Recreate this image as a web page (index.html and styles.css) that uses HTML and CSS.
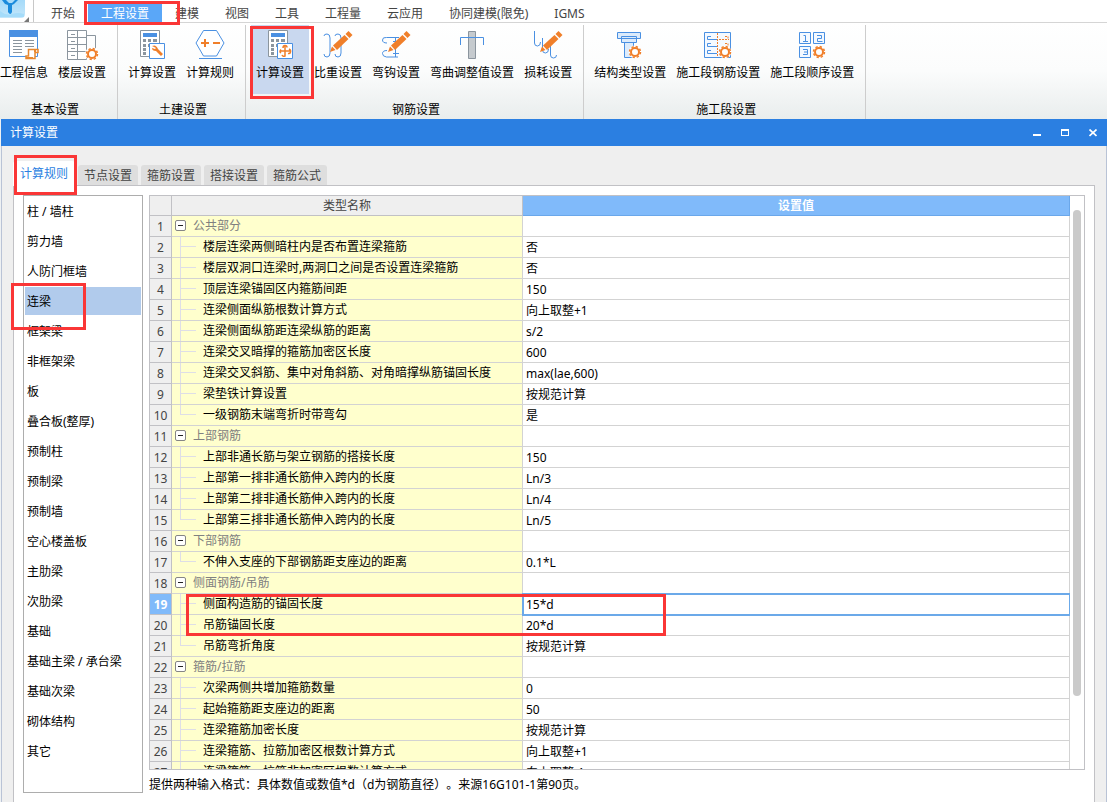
FILE: index.html
```
<!DOCTYPE html>
<html lang="zh-CN">
<head>
<meta charset="utf-8">
<title>计算设置</title>
<link rel="stylesheet" href="styles.css">
</head>
<body>
<svg class="defs" width="0" height="0" aria-hidden="true">
  <defs>
    <g id="gear" fill="none" stroke="#f07f2a">
      <circle r="4" stroke-width="2"/>
      <circle r="5.500" stroke-width="1.500" stroke-dasharray="2.300 2.020"/>
    </g>
    <g id="pencil">
      <path d="M7 22l2-5.500 3.500 3.500z" fill="#f07f2a"/>
      <path d="M10 15.500L21.500 5l4 4L14 20z" fill="#f07f2a"/>
      <path d="M22.500 4l3-3 4 4-3 3z" fill="#f07f2a"/>
    </g>
    <g id="calc">
      <path d="M3.500.5h19v26h-19z" fill="#fff" stroke="#8b959e"/>
      <path d="M6 3h14v4H6z" fill="#4a90e2"/>
      <path d="M6 9h3v3H6zM11 9h3v3h-3zM16 9h4v3h-4zM6 14h3v3H6zM11 14h3v3h-3zM6 18h3v3H6zM6 22h3v3H6z" fill="#8b959e"/>
      <path d="M12.500 13.500h15v15h-15z" fill="#fff" stroke="#4a90e2"/>
    </g>
    <linearGradient id="sky" x2="0" y2="1"><stop stop-color="#9bd6f8"/><stop offset="1" stop-color="#c4e7fb"/></linearGradient>
  </defs>
</svg>

<header class="app">
  <nav class="menu">
    <span class="logo">
      <svg width="34" height="22" viewBox="0 0 34 22">
        <rect x="-4" y="-6" width="29" height="24" rx="4" fill="url(#sky)"/>
        <path d="M0 11q6 5 12 3t12 0v3H0z" fill="#a5dcfa"/>
        <path d="M2 0h4l3 3h3l3-3h3l-4 4-2 1v7q-1.500 4-4 0V5L5 4z" fill="#1b8bdc"/>
        <path d="M29 17v5h-5z" fill="#777"/>
        <path d="M33.500 0v22" stroke="#c8c8c8"/>
      </svg>
    </span>
    <button>开始</button>
    <button class="current">工程设置</button>
    <button>建模</button>
    <button>视图</button>
    <button>工具</button>
    <button>工程量</button>
    <button>云应用</button>
    <button>协同建模(限免)</button>
    <button>IGMS</button>
    <span class="mark mark-menu"></span>
  </nav>

  <div class="ribbon">
    <section class="group">
      <div class="tools">
        <button><svg viewBox="0 0 30 30"><path d="M.5.500h28v26H.5z" fill="#fff" stroke="#4a90e2"/><path d="M0 0h29v7H0z" fill="#4a90e2"/><path d="M4 10.500h9M4 13.500h9M4 16.500h9M4 19.500h9M4 22.500h9M16 10.500h9M16 13.500h9M16 16.500h9" stroke="#8b959e"/><path d="M19.500 19.500h9.500v3h-3v6h-9v-2.500h2.500z" fill="#fff" stroke="#e8882e" stroke-width="1.500"/><path d="M26 22v-2.500M17 28h7" stroke="#e8882e" stroke-width="2"/></svg>工程信息</button>
        <button><svg viewBox="0 0 30 30"><path d="M.5.500h19v29H.5z" fill="#fff" stroke="#8b959e"/><path d="M.5 7.500h19M.5 14.500h19M.5 21.500h19M20 5.500h8.500V20M10.500 1v28M4 4.500h4M4 11.500h4M4 18.500h4M4 25.500h4" stroke="#8b959e" fill="none"/><circle cx="25" cy="24" r="7" fill="#fff"/><use href="#gear" x="25" y="24"/></svg>楼层设置</button>
      </div>
      <h2>基本设置</h2>
    </section>
    <section class="group">
      <div class="tools">
        <button><svg viewBox="0 0 30 30"><use href="#calc"/><path d="M15 16q4-2 6 3l5 5-2 2-5-5q-4 0-4-3l3 1 1-1z" fill="#f07f2a"/></svg>计算设置</button>
        <button><svg viewBox="0 0 30 30"><path d="M8.500.5h13L29 13l-7.500 13h-13L1 13z" fill="#fff" stroke="#4a90e2"/><path d="M4 28.500h23" stroke="#4a90e2"/><path d="M6 13h8M10 9v8M18 13h7" stroke="#f07f2a" stroke-width="2"/></svg>计算规则</button>
      </div>
      <h2>土建设置</h2>
    </section>
    <section class="group">
      <div class="tools">
        <button class="pressed"><svg viewBox="0 0 30 30"><use href="#calc"/><path d="M18 18q0-2.500 2-2.500t2 2M20 16v10q-2 1-3-1M15 21h10M24 19q2 1 1.500 3t-2.500 1.500M16 19.500q-2 2 0 3.500" fill="none" stroke="#f07f2a" stroke-width="1.500"/></svg>计算设置</button>
        <button><svg viewBox="0 0 30 30"><path d="M1 6q0-2 3-2t3 4v15q0 4-3 4t-3-3M12 6q0-2 3-2t3 4v15q0 4-3 4t-3-3" fill="none" stroke="#4a90e2"/><use href="#pencil"/></svg>比重设置</button>
        <button><svg viewBox="0 0 30 30"><path d="M6 13q-4.500 0-4.500-3t4-2.500H18M6 20.500q-4.500 0-4.500 3t4 3.500H17M14.500 7v20M12 11.500h6M12 23.500h6" fill="none" stroke="#4a90e2"/><use href="#pencil"/></svg>弯钩设置</button>
        <button><svg viewBox="0 0 30 30"><path d="M11.500 1.500h7v27h-7z" fill="#c5cace" stroke="#8b959e"/><path d="M3.500 15V7.500h23V15" fill="none" stroke="#4a90e2"/></svg>弯曲调整值设置</button>
        <button><svg viewBox="0 0 30 30"><path d="M1.500 1v12q0 3 3 3t3-4M9.500 8v12q0 3 3 3t3-4M17.500 13v12q0 3 3 3t3-3" fill="none" stroke="#4a90e2"/><use href="#pencil"/></svg>损耗设置</button>
      </div>
      <h2>钢筋设置</h2>
    </section>
    <section class="group">
      <div class="tools">
        <button><svg viewBox="0 0 30 30"><path d="M2.500 2.500h23v6h-23zM6.500 6.500h15v6h-15zM9.500 12.500h9v15h-9z" fill="#dcebfb" stroke="#4a90e2"/><circle cx="20" cy="22" r="6.500" fill="#fff"/><use href="#gear" x="20" y="22"/></svg>结构类型设置</button>
        <button><svg viewBox="0 0 30 30"><path d="M1.500 2.500h26v25h-26z" fill="#f4f9ff" stroke="#4a90e2"/><path d="M8 6.500H4.500v3H14M8 13.500H4.500v3H14M8 20.500H4.500v3H14" fill="none" stroke="#4a90e2"/><path d="M14.500 3v24M16 9.500h10M22 6.500h3v3M22 13.500h3v3" fill="none" stroke="#f07f2a" stroke-dasharray="2 1"/><circle cx="22" cy="22" r="6.500" fill="#fff"/><use href="#gear" x="22" y="22"/></svg>施工段钢筋设置</button>
        <button><svg viewBox="0 0 30 30"><path d="M2.500 2.500h11v11h-11zM16.500 2.500h11v11h-11zM2.500 16.500h11v11h-11z" fill="#f4f9ff" stroke="#4a90e2"/><path d="M6.500 5.500h2v6M6 11.500h5M20 5.500h4.500v3h-4v3h5M6 19.500h4.500v5H6M7 22h3" fill="none" stroke="#4a90e2"/><use href="#gear" x="22" y="22"/></svg>施工段顺序设置</button>
      </div>
      <h2>施工段设置</h2>
    </section>
    <span class="mark mark-tool"></span>
  </div>
</header>

<main class="dialog">
  <div class="titlebar">
    <h1>计算设置</h1>
    <button aria-label="最小化"><svg viewBox="0 0 8 8"><path d="M0 5h8v2H0z" fill="#fff"/></svg></button>
    <button aria-label="最大化"><svg viewBox="0 0 8 8"><path d="M0 0h8v7H0zM1 2v4h6V2z" fill="#fff" fill-rule="evenodd"/></svg></button>
    <button aria-label="关闭"><svg viewBox="0 0 8 8"><path d="M.5.500l7 6.500M7.500.500l-7 6.500" stroke="#fff" stroke-width="1.700"/></svg></button>
  </div>
  <div class="tabs">
    <button class="active">计算规则</button>
    <button>节点设置</button>
    <button>箍筋设置</button>
    <button>搭接设置</button>
    <button>箍筋公式</button>
    <span class="mark mark-tab"></span>
  </div>
  <div class="panel">
    <ul class="kinds">
      <li>柱 / 墙柱</li>
      <li>剪力墙</li>
      <li>人防门框墙</li>
      <li class="chosen">连梁<span class="mark mark-kind"></span></li>
      <li>框架梁</li>
      <li>非框架梁</li>
      <li>板</li>
      <li>叠合板(整厚)</li>
      <li>预制柱</li>
      <li>预制梁</li>
      <li>预制墙</li>
      <li>空心楼盖板</li>
      <li>主肋梁</li>
      <li>次肋梁</li>
      <li>基础</li>
      <li>基础主梁 / 承台梁</li>
      <li>基础次梁</li>
      <li>砌体结构</li>
      <li>其它</li>
    </ul>
    <div class="content">
      <div class="grid">
        <div class="rows">
          <table>
            <colgroup><col class="c-num"><col class="c-name"><col></colgroup>
            <thead><tr><th></th><th>类型名称</th><th class="value-head">设置值</th></tr></thead>
            <tbody>
              <tr class="section"><th>1</th><td><div><button aria-label="折叠"></button>公共部分</div></td><td></td></tr>
              <tr><th>2</th><td><div><i></i>楼层连梁两侧暗柱内是否布置连梁箍筋</div></td><td>否</td></tr>
              <tr><th>3</th><td><div><i></i>楼层双洞口连梁时,两洞口之间是否设置连梁箍筋</div></td><td>否</td></tr>
              <tr><th>4</th><td><div><i></i>顶层连梁锚固区内箍筋间距</div></td><td>150</td></tr>
              <tr><th>5</th><td><div><i></i>连梁侧面纵筋根数计算方式</div></td><td>向上取整+1</td></tr>
              <tr><th>6</th><td><div><i></i>连梁侧面纵筋距连梁纵筋的距离</div></td><td>s/2</td></tr>
              <tr><th>7</th><td><div><i></i>连梁交叉暗撑的箍筋加密区长度</div></td><td>600</td></tr>
              <tr><th>8</th><td><div><i></i>连梁交叉斜筋、集中对角斜筋、对角暗撑纵筋锚固长度</div></td><td>max(lae,600)</td></tr>
              <tr><th>9</th><td><div><i></i>梁垫铁计算设置</div></td><td>按规范计算</td></tr>
              <tr class="last"><th>10</th><td><div><i></i>一级钢筋末端弯折时带弯勾</div></td><td>是</td></tr>
              <tr class="section"><th>11</th><td><div><button aria-label="折叠"></button>上部钢筋</div></td><td></td></tr>
              <tr><th>12</th><td><div><i></i>上部非通长筋与架立钢筋的搭接长度</div></td><td>150</td></tr>
              <tr><th>13</th><td><div><i></i>上部第一排非通长筋伸入跨内的长度</div></td><td>Ln/3</td></tr>
              <tr><th>14</th><td><div><i></i>上部第二排非通长筋伸入跨内的长度</div></td><td>Ln/4</td></tr>
              <tr class="last"><th>15</th><td><div><i></i>上部第三排非通长筋伸入跨内的长度</div></td><td>Ln/5</td></tr>
              <tr class="section"><th>16</th><td><div><button aria-label="折叠"></button>下部钢筋</div></td><td></td></tr>
              <tr class="last"><th>17</th><td><div><i></i>不伸入支座的下部钢筋距支座边的距离</div></td><td>0.1*L</td></tr>
              <tr class="section"><th>18</th><td><div><button aria-label="折叠"></button>侧面钢筋/吊筋</div></td><td></td></tr>
              <tr class="selected"><th>19</th><td><div><i></i>侧面构造筋的锚固长度<span class="mark mark-rows"></span></div></td><td>15*d</td></tr>
              <tr><th>20</th><td><div><i></i>吊筋锚固长度</div></td><td>20*d</td></tr>
              <tr class="last"><th>21</th><td><div><i></i>吊筋弯折角度</div></td><td>按规范计算</td></tr>
              <tr class="section"><th>22</th><td><div><button aria-label="折叠"></button>箍筋/拉筋</div></td><td></td></tr>
              <tr><th>23</th><td><div><i></i>次梁两侧共增加箍筋数量</div></td><td>0</td></tr>
              <tr><th>24</th><td><div><i></i>起始箍筋距支座边的距离</div></td><td>50</td></tr>
              <tr><th>25</th><td><div><i></i>连梁箍筋加密长度</div></td><td>按规范计算</td></tr>
              <tr><th>26</th><td><div><i></i>连梁箍筋、拉筋加密区根数计算方式</div></td><td>向上取整+1</td></tr>
              <tr><th>27</th><td><div><i></i>连梁箍筋、拉筋非加密区根数计算方式</div></td><td>向上取整-1</td></tr>
            </tbody>
          </table>
        </div>
        <div class="scroll"><div class="thumb"></div></div>
      </div>
      <p class="hint">提供两种输入格式：具体数值或数值*d（d为钢筋直径）。来源16G101-1第90页。</p>
    </div>
  </div>
</main>
</body>
</html>
```
FILE: styles.css
```
* { box-sizing: border-box; }

body {
  margin: 0;
  height: 100vh;
  overflow: hidden;
  display: flex;
  flex-direction: column;
  background: #eef1f3;
  color: #000;
  font: 12px/20px "Noto Sans", "Noto Sans CJK SC", sans-serif;
}

button {
  font: inherit;
  color: inherit;
  background: none;
  border: 0;
  padding: 0;
  white-space: nowrap;
}

h1, h2, p, ul { margin: 0; padding: 0; font-size: 12px; font-weight: normal; }

.defs { position: absolute; }

/* red callout frames */
.mark {
  position: absolute;
  z-index: 2;
  border: 3px solid #fa3636;
  pointer-events: none;
}

/* top menu */
.menu {
  position: relative;
  display: flex;
  height: 23px;
  padding-top: 4px;
  background: #fff;
  border-bottom: 1px solid #d5d5d5;
}
.logo { width: 38px; margin-top: -4px; }
.logo svg { display: block; }
.menu button { padding: 1px 13px 0; height: 18px; line-height: 18px; color: #444; }
.menu .current { background: #5aa7f8; color: #fff; }
.mark-menu { left: 84px; top: 1px; width: 96px; height: 24px; }

/* ribbon */
.ribbon {
  position: relative;
  display: flex;
  height: 96px;
  padding: 2px 0 0;
  margin-left: -5px;
  background: linear-gradient(#fff, #fbfcfc 50%, #e9eded);
}
.group {
  display: flex;
  flex-direction: column;
  justify-content: space-between;
  padding: 0 6px 0 5px;
  border-right: 1px solid #cdcdcd;
}
.group:first-child { padding-left: 0; }
.tools { display: flex; }
.tools button {
  display: flex;
  flex-direction: column;
  align-items: center;
  gap: 3px;
  height: 69px;
  padding: 5px 5px 0;
}
.tools svg { width: 30px; height: 30px; overflow: visible; }
.tools .pressed { background: #c9d8ef; }
.group h2 { padding-left: 4px; text-align: center; line-height: 18px; }
.mark-tool { left: 255px; top: 3px; width: 64px; height: 73px; }

/* dialog */
.dialog {
  flex: 1;
  min-height: 0;
  display: flex;
  flex-direction: column;
  margin-left: 1px;
  background: #efefef;
  border-left: 1px solid #b9c3d6;
  border-right: 1px solid #b9c3d6;
}
.titlebar {
  display: flex;
  align-items: center;
  gap: 20px;
  height: 27px;
  margin: 0 -1px;
  padding: 0 10px 0 9px;
  background: #2b7fe1;
  color: #fff;
}
.titlebar h1 { flex: 1; }
.titlebar svg { display: block; width: 8px; height: 8px; }

.tabs {
  position: relative;
  z-index: 1;
  display: flex;
  align-items: flex-end;
  gap: 3px;
  height: 39px;
  padding-left: 11px;
}
.tabs button {
  width: 60px;
  height: 20px;
  padding-top: 1px;
  border-radius: 3px 3px 0 0;
  background: #dedede;
  color: #444;
}
.tabs .active {
  width: 62px;
  height: 25px;
  margin-bottom: -1px;
  background: #fff;
  color: #2b7fe1;
}
.mark-tab { left: 12px; top: 9px; width: 63px; height: 40px; }

.panel {
  flex: 1;
  min-height: 0;
  display: flex;
  gap: 6px;
  margin: 0 11px;
  padding: 9px 9px 0;
  background: #fff;
  border: 1px solid #c1c1c5;
  border-bottom: 0;
}

.kinds {
  display: flex;
  flex-direction: column;
  gap: 2px;
  width: 120px;
  margin-bottom: 9px;
  padding: 1px;
  border: 1px solid #adadad;
  list-style: none;
}
.kinds li { position: relative; height: 28px; padding-left: 2px; line-height: 30px; white-space: nowrap; }
.kinds .chosen { background: #b1cbec; }
.mark-kind { left: -14px; top: -4px; width: 75px; height: 47px; }

.content { flex: 1; min-width: 0; display: flex; flex-direction: column; }
.grid {
  flex: 1;
  min-height: 0;
  display: flex;
  border: 1px solid #c1c1c5;
}
.rows { flex: 1; min-width: 0; overflow: hidden; }

table { width: 100%; table-layout: fixed; border-collapse: separate; border-spacing: 0; }
.c-num { width: 22px; }
.c-name { width: 351px; }
th, td {
  height: 21px;
  padding: 0;
  line-height: 20px;
  border-right: 1px solid #d3d3d3;
  border-bottom: 1px solid #d3d3d3;
  white-space: nowrap;
}
th { background: #efefef; color: #444; font-weight: normal; border-color: #c1c1c5; }
tbody th { padding-top: 2px; line-height: 18px; }
thead th { height: 20px; padding-top: 1px; line-height: 18px; }
thead .value-head { background: #80bafa; color: #fff; font-weight: bold; border-color: #6aa7ea; }
tbody td:nth-child(2) { background: #ffffcd; }
tbody td:nth-child(3) { padding: 2px 0 0 3px; line-height: 18px; }

td div { position: relative; display: flex; align-items: center; height: 20px; line-height: 22px; }
td i {
  width: 16px;
  height: 20px;
  margin: 0 7px 0 8px;
  background:
    linear-gradient(#dedee6, #dedee6) 0 0 / 1px 100% no-repeat,
    linear-gradient(#dedee6, #dedee6) 0 9px / 16px 1px no-repeat;
}
.last i {
  background-size: 1px 10px, 16px 1px;
}
.section td { color: #808080; }
.section button {
  width: 11px;
  height: 11px;
  margin: 0 7px 1px 3px;
  border: 1px solid #858585;
  border-radius: 2px;
  background: linear-gradient(#222, #222) center / 5px 1px no-repeat #fff;
}
.selected th { background: #80bafa; color: #fff; font-weight: bold; }
.selected td:nth-child(3) { outline: 2px solid #6ba9e9; outline-offset: -1px; }
.mark-rows { left: 14px; top: 0; width: 480px; height: 42px; }

.scroll { width: 14px; padding: 14px 3px 0; }
.thumb { height: 87%; border-radius: 4px; background: #cacaca; }

.hint { height: 32px; line-height: 30px; white-space: nowrap; text-spacing-trim: space-all; }
```
